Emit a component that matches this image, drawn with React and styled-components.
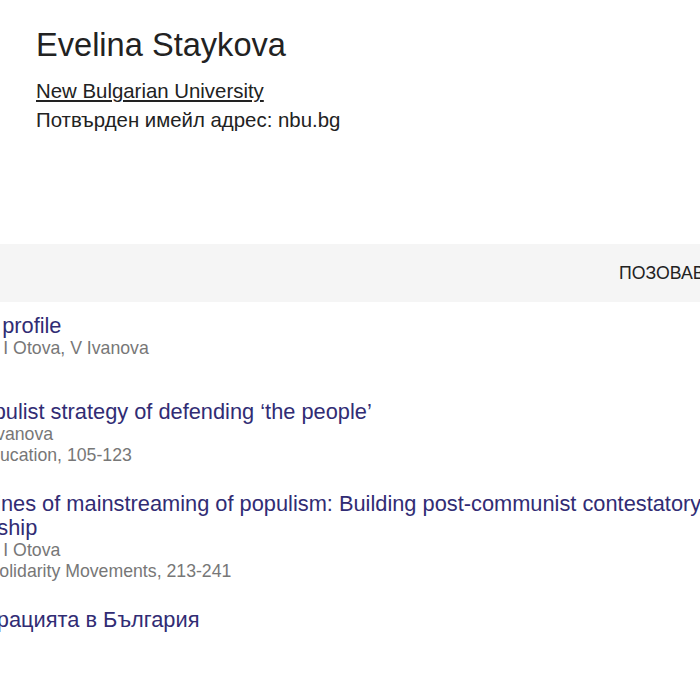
import React from "react";
import styled, { createGlobalStyle } from "styled-components";

const GlobalStyle = createGlobalStyle`
  html, body {
    margin: 0;
    padding: 0;
    overflow: hidden;
    background: #fff;
  }
  body {
    font-family: "Liberation Sans", Arial, sans-serif;
    color: #222;
  }
`;

const Profile = styled.section`
  box-sizing: border-box;
  height: 244px;
  padding: 25px 0 0 36px;
`;

const Name = styled.h1`
  margin: 0;
  font-size: 32.6px;
  line-height: 40px;
  font-weight: 400;
  color: #222;
`;

const InfoList = styled.div`
  margin-top: 12.4px;
  font-size: 20.4px;
  line-height: 29px;
  color: #222;
`;

const Affiliation = styled.a`
  color: #222;
  text-decoration: underline;
`;

const Table = styled.div`
  margin-left: -96px;
  width: 925px;
`;

const HeadBand = styled.div`
  display: grid;
  grid-template-columns: 1fr 130px 80px;
  align-items: center;
  height: 58px;
  background: #f5f5f5;
  font-size: 17.7px;
  text-transform: uppercase;
  color: #222;
`;

const HeadCell = styled.div`
  text-align: ${(props) => props.$align || "left"};
  white-space: nowrap;
`;

const Row = styled.div`
  width: 815px;
  padding: 6px 0 20px;
  &:first-of-type {
    padding: 12px 0 14px;
  }
`;

const Title = styled.a`
  display: block;
  font-size: 21.8px;
  line-height: 24px;
  color: #312c74;
  text-decoration: none;
`;

const Gray = styled.div`
  font-size: 17.7px;
  line-height: 21px;
  color: #777;
  white-space: nowrap;
`;

const articles = [
  {
    title: "The voter profile",
    authors: "E Staykova, I Otova, V Ivanova",
    venue: "NBU",
  },
  {
    title: "A new populist strategy of defending ‘the people’",
    authors: "S Stoev, V Ivanova",
    venue: "Values & Education, 105-123",
  },
  {
    title:
      "Two Routines of mainstreaming of populism: Building post-communist contestatory for citizenship",
    authors: "E Staykova, I Otova",
    venue: "Crisis and Solidarity Movements, 213-241",
  },
  {
    title: "За демокрацията в България",
    authors: "E Staykova",
    venue: "НБУ",
  },
];

const App = () => {
  return (
    <>
      <GlobalStyle />
      <Profile>
        <Name>Evelina Staykova</Name>
        <InfoList>
          <div>
            <Affiliation href="#">New Bulgarian University</Affiliation>
          </div>
          <div>Потвърден имейл адрес: nbu.bg</div>
        </InfoList>
      </Profile>
      <Table>
        <HeadBand>
          <HeadCell>Заглавие</HeadCell>
          <HeadCell>Позовавания</HeadCell>
          <HeadCell $align="right">Година</HeadCell>
        </HeadBand>
        <div>
          {articles.map((item) => (
            <Row key={item.title}>
              <Title href="#">{item.title}</Title>
              <Gray>{item.authors}</Gray>
              <Gray>{item.venue}</Gray>
            </Row>
          ))}
        </div>
      </Table>
    </>
  );
};

export default App;
